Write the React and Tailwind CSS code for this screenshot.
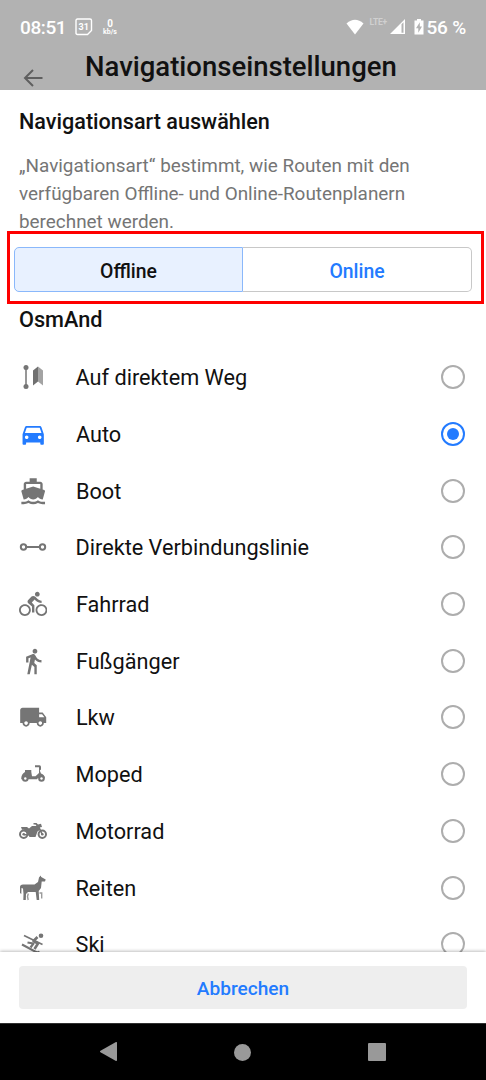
import React from "react";
import {
  MdDirectionsCar,
  MdDirectionsBoat,
  MdDirectionsBike,
  MdDirectionsWalk,
  MdLocalShipping,
} from "react-icons/md";

function Glyph({ children }) {
  return (
    <svg viewBox="0 0 28 28" className="size-7" fill="none" stroke="none">
      {children}
    </svg>
  );
}

function DirectWayIcon() {
  return (
    <Glyph>
      <path d="M7 5V23" stroke="#8c8c8c" strokeWidth="1.8" />
      <circle cx="7" cy="4.500" r="2.500" fill="#757575" />
      <circle cx="7" cy="23.500" r="2.500" fill="#757575" />
      <path d="M14 7.500 19 3.500V18.500L14 22.500Z" fill="#707070" />
      <path d="M19 3.500 24 7.500V22.500L19 18.500Z" fill="#a3a3a3" />
    </Glyph>
  );
}

function LineIcon() {
  return (
    <Glyph>
      <g stroke="#757575" strokeWidth="2">
        <circle cx="4.500" cy="14" r="2.700" />
        <circle cx="23.500" cy="14" r="2.700" />
        <path d="M7 14H21" />
      </g>
    </Glyph>
  );
}

function MopedIcon() {
  return (
    <Glyph>
      <g fill="#757575">
        <path d="M6 10H12.300V12L13 16.200H16.500L20 13V7.300H16V5.300H20.500Q22 5.300 22 7V9.500L20.800 10.500 22 13.500Q25.700 14.500 25.800 18H19L18 19.200H2.200Q2.200 14 6 12Z" />
        <circle cx="6.300" cy="18.500" r="3.300" />
        <circle cx="22.500" cy="18.500" r="3.300" />
      </g>
      <circle cx="6.300" cy="18.500" r="1.200" fill="white" />
      <circle cx="22.500" cy="18.500" r="1.200" fill="white" />
    </Glyph>
  );
}

function MotorcycleIcon() {
  return (
    <Glyph>
      <circle cx="4.700" cy="17.300" r="3.700" stroke="#757575" strokeWidth="2" />
      <circle cx="23.300" cy="17.300" r="3.700" stroke="#757575" strokeWidth="2" />
      <circle cx="4.700" cy="17.300" r="1.300" fill="#757575" />
      <circle cx="23.300" cy="17.300" r="1.300" fill="#757575" />
      <path d="M2 10H8L10 11.500 13 9 17.500 9 16.500 7.500H14.500V6H17.500L19 7.500 22 6.800 23 10 20.500 10.500 21.500 12.500 18.500 14.500 16.500 20H10.500L8 15.500 5 12.700H3Z" fill="#757575" />
      <path d="M19.500 9.500 23.300 17.500M5 17.700H12" stroke="#757575" strokeWidth="1.600" />
    </Glyph>
  );
}

function HorseIcon() {
  return (
    <Glyph>
      <path d="M1 13Q1 10.500 4 10.500H15.500L19 8 20 3.500 21.700 1.500 22.200 3 26.700 5.500 26 7.500 22.700 7.500 22 14 19.700 17 20.200 26H17.700L16.700 18H9L7 20 6.800 26H4.300L4.500 20 4 14.500 2.500 14 2.300 20 1 19Z" fill="#757575" />
      <path d="M9.300 19.500 8.500 22.500 9.200 26M20.500 19H22.700V24.500" stroke="#9b9b9b" strokeWidth="1.400" />
    </Glyph>
  );
}

function SkiIcon() {
  return (
    <Glyph>
      <circle cx="22" cy="5.700" r="2.300" fill="#757575" />
      <g stroke="#757575" strokeLinejoin="round">
        <path d="M5 5.500 23.500 14.500" strokeWidth="1.600" />
        <path d="M18.500 7 14.500 11 19 13.500 15.500 19" strokeWidth="2.600" />
        <path d="M8.500 12.500 14.500 13.500 11.500 17.500" strokeWidth="2.200" />
        <path d="M3 14.500 16.500 21.700Q19 23 20.500 21.500" strokeWidth="2.100" />
      </g>
    </Glyph>
  );
}

const modes = [
  { label: "Auf direktem Weg", icon: <DirectWayIcon /> },
  { label: "Auto", icon: <MdDirectionsCar />, selected: true },
  { label: "Boot", icon: <MdDirectionsBoat /> },
  { label: "Direkte Verbindungslinie", icon: <LineIcon /> },
  { label: "Fahrrad", icon: <MdDirectionsBike /> },
  { label: "Fußgänger", icon: <MdDirectionsWalk /> },
  { label: "Lkw", icon: <MdLocalShipping /> },
  { label: "Moped", icon: <MopedIcon /> },
  { label: "Motorrad", icon: <MotorcycleIcon /> },
  { label: "Reiten", icon: <HorseIcon /> },
  { label: "Ski", icon: <SkiIcon /> },
];

function Radio({ selected }) {
  return (
    <span
      className={
        selected
          ? "flex size-6 items-center justify-center rounded-full border-2 border-[#237bff]"
          : "flex size-6 items-center justify-center rounded-full border-2 border-[#adadad]"
      }
    >
      {selected && <span className="size-3 rounded-full bg-[#237bff]" />}
    </span>
  );
}

function StatusBar() {
  return (
    <div className="flex h-[54px] items-center pl-5 pr-5 text-white">
      <span className="w-[47px] whitespace-nowrap text-[19px] font-medium leading-none tracking-[-0.4px]">08:51</span>
      <svg viewBox="0 0 18 18" className="ml-2 size-[18px] shrink-0">
        <path d="M2.500 1H15Q16.500 1 16.500 2.500V12.500L12.500 16.500H2.500Q1 16.500 1 15V2.500Q1 1 2.500 1Z" fill="none" stroke="white" strokeWidth="1.400" />
        <text x="8.700" y="11.800" textAnchor="middle" fontSize="9" fontWeight="700" fill="white">31</text>
      </svg>
      <div className="ml-2 flex w-[18px] flex-col items-center text-center font-bold">
        <span className="scale-x-90 text-[11px] leading-[11px]">0</span>
        <span className="text-[7px] leading-[7px]">kb/s</span>
      </div>
      <div className="ml-auto flex items-center">
        <svg viewBox="0 0 18 16" className="h-4 w-[18px]">
          <path d="M.5 4.500Q9-3 17.500 4.500L9 15.500Z" fill="white" />
        </svg>
        <span className="mb-2.5 ml-[5px] w-[18px] text-[8.500px] font-bold leading-none tracking-[-0.2px] text-[#d0d0d0]">LTE+</span>
        <svg viewBox="0 0 16 16" className="ml-[3px] size-4">
          <path d="M0 15 15 0V15ZM11.500 5.200V13.700H13.500V3.200Z" fill="white" fillRule="evenodd" />
        </svg>
        <svg viewBox="0 0 10 16" className="ml-2 h-4 w-2.5">
          <path d="M3 0H7V1.500H9.500V15.500H.5V1.500H3ZM5.800 3.300 2 9.300H4.300V13.700L8 7.500H5.800Z" fill="white" fillRule="evenodd" />
        </svg>
        <span className="ml-[2px] whitespace-nowrap text-[19px] font-medium leading-none tracking-[-0.2px]">56 %</span>
      </div>
    </div>
  );
}

export default function App() {
  return (
    <div className="flex h-[1080px] w-[486px] flex-col overflow-hidden bg-white font-['Roboto',sans-serif] text-[#111111]">
      <header className="h-[90px] shrink-0 bg-[#b2b2b2]">
        <StatusBar />
        <div className="flex h-9 items-start">
          <svg viewBox="0 0 20 18" className="ml-[23px] mt-[15px] h-[18px] w-5" fill="none" stroke="#5f5f5f" strokeWidth="2">
            <path d="M19.500 9H2M10 1 2 9 10 17" />
          </svg>
          <h1 className="-mt-[3px] ml-[42px] whitespace-nowrap text-[27.500px] font-medium leading-8">Navigationseinstellungen</h1>
        </div>
      </header>

      <section className="h-[141px] shrink-0 px-[19px] pt-[18px]">
        <h2 className="text-[21.600px] font-medium leading-7">Navigationsart auswählen</h2>
        <p className="mt-4 whitespace-nowrap text-[18.900px] leading-[28px] text-[#757575]">
          „Navigationsart“ bestimmt, wie Routen mit den
          <br />
          verfügbaren Offline- und Online-Routenplanern
          <br />
          berechnet werden.
        </p>
      </section>

      <div className="ml-[7px] flex h-[73px] w-[477px] shrink-0 border-3 border-[#fe0000] pb-[9px] pl-1 pr-[9px] pt-[13px]">
        <button className="w-[229px] rounded-l-[5px] border border-[#8ab8fb] bg-[#e8f1ff] pt-[4px] text-[19.400px] font-medium">Offline</button>
        <button className="flex-1 rounded-r-[5px] border border-l-0 border-[#c8c8c8] pt-[4px] text-[19.400px] font-medium text-[#237bff]">Online</button>
      </div>

      <main className="h-[648px] shrink-0 overflow-hidden">
        <h2 className="h-[45px] pl-[19px] pt-[2px] text-[21.700px] font-medium leading-7">OsmAnd</h2>
        <ul>
          {modes.map((mode) => (
            <li key={mode.label} className="flex h-[56.700px] items-center pl-[19px] pr-[21px]">
              <span className={mode.selected ? "text-[28.400px] text-[#237bff]" : "text-[28.400px] text-[#757575]"}>{mode.icon}</span>
              <span className="ml-[28.500px] flex-1 pt-[2px] text-[21.700px] leading-7">{mode.label}</span>
              <Radio selected={mode.selected} />
            </li>
          ))}
        </ul>
      </main>

      <footer className="relative h-[71px] shrink-0 bg-white px-[19px] pt-[14px] shadow-[0_-1px_3px_rgba(0,0,0,0.25)]">
        <button className="h-[43px] w-full rounded-[4px] bg-[#eeeeee] pt-[4px] text-[19.100px] font-medium text-[#237bff]">Abbrechen</button>
      </footer>

      <nav className="flex flex-1 items-center border-t border-[#333333] bg-black">
        <svg viewBox="0 0 17 20" className="ml-[100px] h-5 w-[17px]" fill="#999999">
          <path d="M0 9.500Q0 9 .5 8.700L15.500.2Q17-.5 17 1V18Q17 19.500 15.500 18.800L.5 10.300Q0 10 0 9.500Z" />
        </svg>
        <span className="ml-[117px] size-[17px] rounded-full bg-[#999999]" />
        <span className="ml-[117px] size-[18px] rounded-[1px] bg-[#999999]" />
      </nav>
    </div>
  );
}
